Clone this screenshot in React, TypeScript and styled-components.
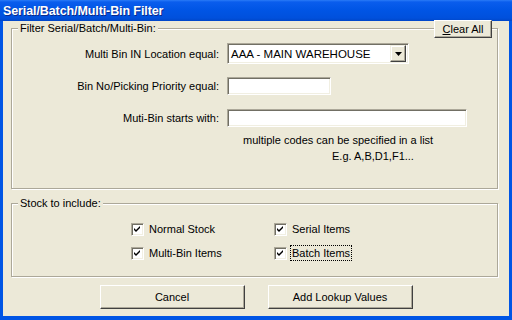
import React from "react";
import styled, { createGlobalStyle } from "styled-components";

const GlobalStyle = createGlobalStyle`
    html, body {
        margin: 0;
        padding: 0;
        background: #ece9d8;
    }
    body {
        font-family: "Liberation Sans", Arial, sans-serif;
        font-size: 11px;
        color: #000;
    }
`;

const Window = styled.div`
    width: 512px;
    height: 320px;
    box-sizing: border-box;
    display: flex;
    flex-direction: column;
    background: #0055e5;
    padding: 0 3px 4px 3px;
`;

const TitleBar = styled.div`
    height: 21px;
    margin: 0 -3px;
    padding-left: 3px;
    display: flex;
    align-items: center;
    background: linear-gradient(#2a7bf7 0, #0a5ded 2px, #0055e5 10px, #0050dc 18px, #0046c8 21px);
    color: #fff;
    font-weight: bold;
    font-size: 12.5px;
    letter-spacing: -0.1px;
    text-shadow: 1px 1px 0 #0a2a8a;
`;

const Body = styled.div`
    flex: 1;
    background: #ece9d8;
    display: flex;
    flex-direction: column;
    padding: 0 11px 0 8px;
`;

const GroupBox = styled.div<{ $height: number; $top: number }>`
    position: relative;
    height: ${({ $height }) => $height}px;
    margin-top: ${({ $top }) => $top}px;
    box-sizing: border-box;
    border: 1px solid #aca899;
    box-shadow: inset 1px 1px 0 #fff, 1px 1px 0 #fff;
`;

const Legend = styled.span`
    position: absolute;
    top: -7px;
    left: 6px;
    padding: 0 2px 0 2px;
    background: #ece9d8;
    line-height: 13px;
`;

const Button = styled.button<{ $width: number; $height: number }>`
    width: ${({ $width }) => $width}px;
    height: ${({ $height }) => $height}px;
    padding: 0;
    font: inherit;
    color: #000;
    background: #ece9d8;
    border: 1px solid;
    border-color: #fff #404040 #404040 #fff;
    box-shadow: inset -1px -1px 0 #aca899;
`;

const ClearButton = styled(Button)`
    position: absolute;
    top: -9px;
    right: 5px;
`;

const FormGrid = styled.div`
    display: grid;
    grid-template-columns: 207px auto;
    column-gap: 8px;
    align-items: center;
    padding-top: 14px;
`;

const Label = styled.span<{ $gap?: number }>`
    text-align: right;
    margin-top: ${({ $gap }) => $gap ?? 0}px;
`;

const Field = styled.div<{ $width: number; $height: number; $gap?: number }>`
    width: ${({ $width }) => $width}px;
    height: ${({ $height }) => $height}px;
    margin-top: ${({ $gap }) => $gap ?? 0}px;
    box-sizing: border-box;
    background: #fff;
    border: 1px solid;
    border-color: #aca899 #fff #fff #aca899;
    box-shadow: inset 1px 1px 0 #716f64, inset -1px -1px 0 #f1efe2;
    display: flex;
    align-items: center;
    padding: 0 2px 0 3px;
`;

const SelectText = styled.span`
    flex: 1;
    font-size: 11.5px;
`;

const ArrowButton = styled.span`
    width: 16px;
    height: 17px;
    box-sizing: border-box;
    background: #ece9d8;
    border: 1px solid;
    border-color: #f1efe2 #404040 #404040 #f1efe2;
    box-shadow: inset -1px -1px 0 #aca899, inset 1px 1px 0 #fff;
    display: flex;
    align-items: center;
    justify-content: center;
`;

const Hint = styled.div`
    grid-column: 2;
    margin-top: 5px;
    line-height: 16px;
`;

const HintLine = styled.div<{ $indent: number }>`
    padding-left: ${({ $indent }) => $indent}px;
`;

const CheckGrid = styled.div`
    display: grid;
    grid-template-columns: 143px auto;
    grid-auto-rows: 16px;
    row-gap: 8px;
    padding: 17px 0 0 119px;
`;

const CheckItem = styled.label`
    display: flex;
    align-items: center;
    gap: 5px;
`;

const Box = styled.span`
    width: 13px;
    height: 13px;
    box-sizing: border-box;
    background: #fff;
    border: 1px solid;
    border-color: #aca899 #fff #fff #aca899;
    box-shadow: inset 1px 1px 0 #716f64, inset -1px -1px 0 #f1efe2;
    display: flex;
    align-items: center;
    justify-content: center;
`;

const CheckText = styled.span<{ $focused?: boolean }>`
    outline: ${({ $focused }) => ($focused ? "1px dotted #000" : "none")};
    line-height: 14px;
    padding: 0 1px;
    margin-left: -1px;
`;

const ButtonRow = styled.div`
    display: flex;
    justify-content: center;
    gap: 23px;
    margin-top: 8px;
    padding-left: 3px;
`;

const Check = () => (
    <svg width="7" height="7" viewBox="0 0 7 7">
        <path d="M0 2 L2 4 L6 0 L6 2 L2 6 L0 4 Z" fill="#000" />
    </svg>
);

const checks = [
    { label: "Normal Stock" },
    { label: "Serial Items" },
    { label: "Multi-Bin Items" },
    { label: "Batch Items", focused: true },
];

const App: React.FC = () => {
    return (
        <>
            <GlobalStyle />
            <Window>
                <TitleBar>Serial/Batch/Multi-Bin Filter</TitleBar>
                <Body>
                    <GroupBox $height={161} $top={7}>
                        <Legend>Filter Serial/Batch/Multi-Bin:</Legend>
                        <ClearButton $width={58} $height={18}>
                            <u>C</u>lear All
                        </ClearButton>
                        <FormGrid>
                            <Label>Multi Bin IN Location equal:</Label>
                            <Field $width={182} $height={21}>
                                <SelectText>AAA - MAIN WAREHOUSE</SelectText>
                                <ArrowButton>
                                    <svg width="7" height="4" viewBox="0 0 7 4">
                                        <path d="M0 0 H7 L3.5 4 Z" fill="#000" />
                                    </svg>
                                </ArrowButton>
                            </Field>
                            <Label $gap={13}>Bin No/Picking Priority equal:</Label>
                            <Field $width={104} $height={18} $gap={13} />
                            <Label $gap={14}>Muti-Bin starts with:</Label>
                            <Field $width={240} $height={18} $gap={14} />
                            <Hint>
                                <HintLine $indent={16}>multiple codes can be specified in a list</HintLine>
                                <HintLine $indent={105}>E.g. A,B,D1,F1...</HintLine>
                            </Hint>
                        </FormGrid>
                    </GroupBox>
                    <GroupBox $height={74} $top={14}>
                        <Legend>Stock to include:</Legend>
                        <CheckGrid>
                            {checks.map((c) => (
                                <CheckItem key={c.label}>
                                    <Box>
                                        <Check />
                                    </Box>
                                    <CheckText $focused={c.focused}>{c.label}</CheckText>
                                </CheckItem>
                            ))}
                        </CheckGrid>
                    </GroupBox>
                    <ButtonRow>
                        <Button $width={145} $height={24}>Cancel</Button>
                        <Button $width={145} $height={24}>Add Lookup Values</Button>
                    </ButtonRow>
                </Body>
            </Window>
        </>
    );
};

export default App;
